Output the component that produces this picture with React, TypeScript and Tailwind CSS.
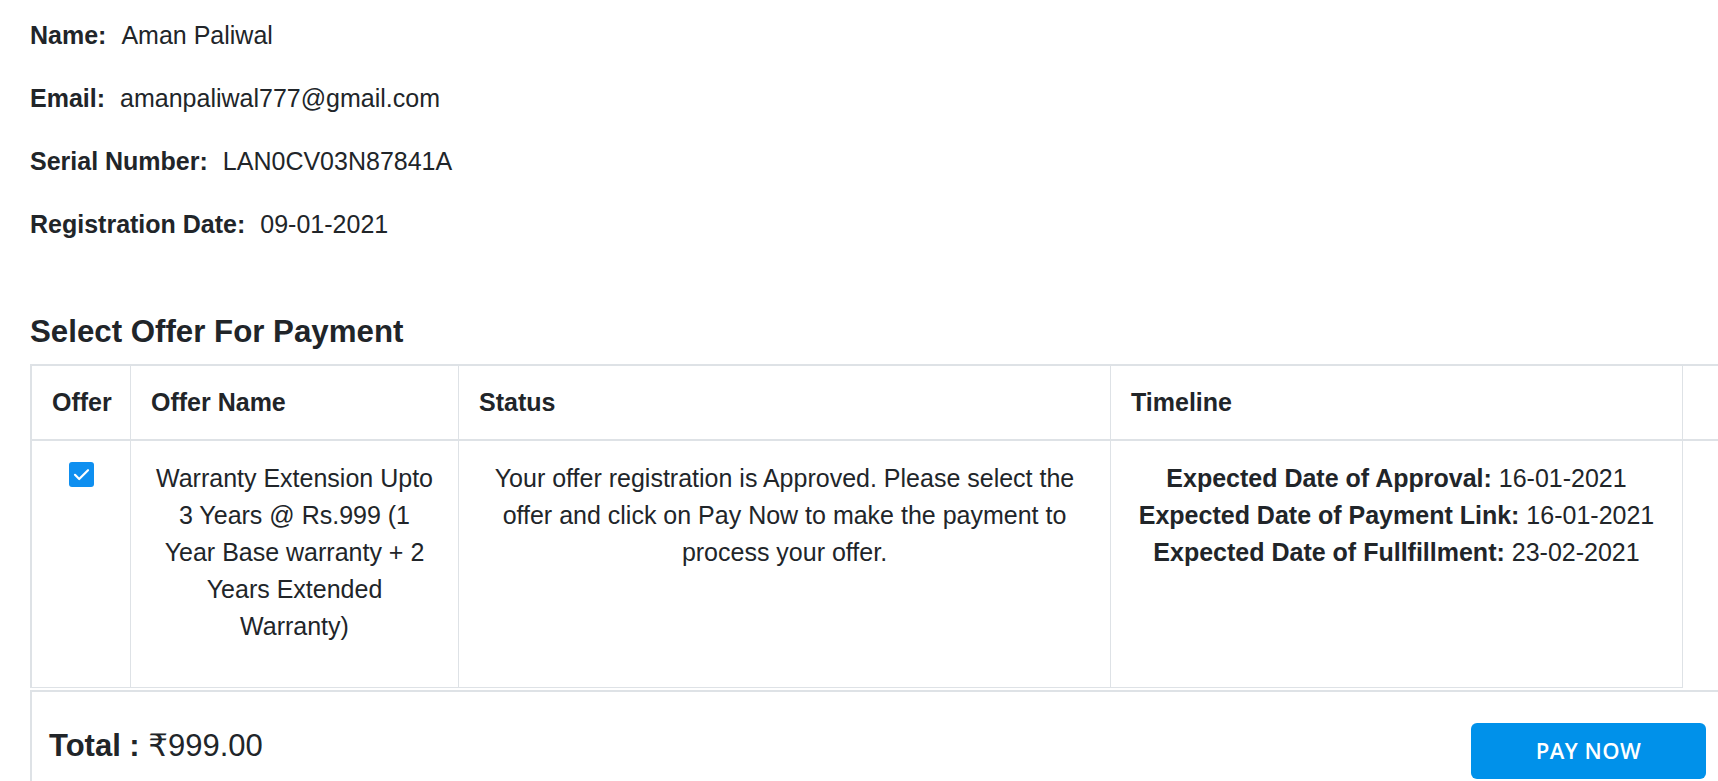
import React from "react";

const details = [
  { label: "Name:", value: "Aman Paliwal" },
  { label: "Email:", value: "amanpaliwal777@gmail.com" },
  { label: "Serial Number:", value: "LAN0CV03N87841A" },
  { label: "Registration Date:", value: "09-01-2021" },
];

const timeline = [
  { label: "Expected Date of Approval:", date: "16-01-2021" },
  { label: "Expected Date of Payment Link:", date: "16-01-2021" },
  { label: "Expected Date of Fullfillment:", date: "23-02-2021" },
];

export default function App() {
  return (
    <div
      className="min-h-screen w-full overflow-hidden bg-white pl-[30px] pt-[17px] text-[25px] text-[#212529]"
      style={{ fontFamily: '"Liberation Sans", Arial, "DejaVu Sans", sans-serif' }}
    >
      {/* customer details */}
      {details.map((d) => (
        <p key={d.label} className="mb-[25.5px] leading-[37.5px]">
          <span className="mr-[15px] font-bold">{d.label}</span>
          {d.value}
        </p>
      ))}

      <h5 className="mb-[13px] mt-[69.5px] text-[31.25px] font-bold leading-[37.5px]">
        Select Offer For Payment
      </h5>

      {/* offers table */}
      <div className="grid grid-cols-[99px_328px_652px_572px_200px] border-l-2 border-t-2 border-[#dee2e6]">
        <div className="border-b-2 border-r border-[#dee2e6] px-[20px] py-[18px] font-bold leading-[37px]">Offer</div>
        <div className="border-b-2 border-r border-[#dee2e6] px-[20px] py-[18px] font-bold leading-[37px]">Offer Name</div>
        <div className="border-b-2 border-r border-[#dee2e6] px-[20px] py-[18px] font-bold leading-[37px]">Status</div>
        <div className="border-b-2 border-r border-[#dee2e6] px-[20px] py-[18px] font-bold leading-[37px]">Timeline</div>
        <div className="border-b-2 border-[#dee2e6]"></div>

        <div className="flex justify-center border-b border-r border-[#dee2e6] px-[20px] pb-[42px] pt-[19px]">
          <div className="mt-[2px] flex h-[25px] w-[25px] items-center justify-center rounded-[3px] bg-[#0e8ff0]">
            <svg width="25" height="25" viewBox="0 0 25 25" fill="none">
              <path d="M6 12.8l4.2 4.2L19 8.2" stroke="#fff" strokeWidth="2.2" strokeLinecap="round" strokeLinejoin="round" />
            </svg>
          </div>
        </div>
        <div className="border-b border-r border-[#dee2e6] px-[20px] pb-[42px] pt-[19px] text-center leading-[37px]">
          Warranty Extension Upto 3 Years @ Rs.999 (1 Year Base warranty + 2 Years Extended Warranty)
        </div>
        <div className="border-b border-r border-[#dee2e6] px-[20px] pb-[42px] pt-[19px] text-center leading-[37px]">
          Your offer registration is Approved. Please select the offer and click on Pay Now to make the payment to process your offer.
        </div>
        <div className="border-b border-r border-[#dee2e6] px-[20px] pb-[42px] pt-[19px] text-center leading-[37px]">
          {timeline.map((t) => (
            <div key={t.label}>
              <span className="font-bold">{t.label}</span> {t.date}
            </div>
          ))}
        </div>
        <div></div>
      </div>

      {/* footer */}
      <div className="mt-[2px] flex items-start justify-between border-l-2 border-t-2 border-[#dee2e6] pb-[30px] pl-[17px] pr-[12px] pt-[31px]">
        <div className="mt-[4px] text-[31px] leading-[37px]">
          <span className="font-bold">Total :</span> ₹999.00
        </div>
        <button
          className="flex h-[56px] w-[235px] items-center justify-center rounded-[6px] bg-[#0091ea] text-[22px] font-semibold tracking-[0.5px] text-white"
          style={{ fontFamily: '"Open Sans", "Noto Sans", sans-serif' }}
        >
          PAY NOW
        </button>
      </div>
    </div>
  );
}
